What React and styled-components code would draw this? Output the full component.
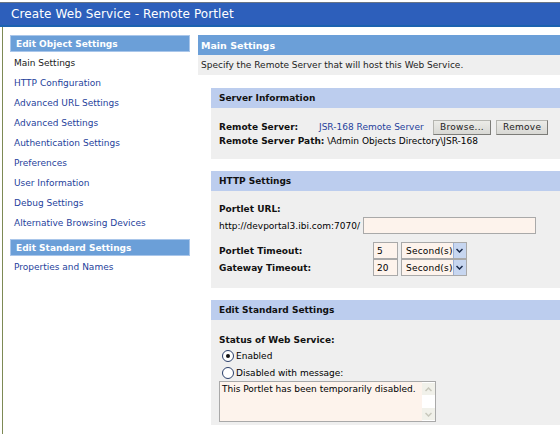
import React from 'react'
import styled, { createGlobalStyle } from 'styled-components'

const GlobalStyle = createGlobalStyle`
  html, body {
    margin: 0;
    padding: 0;
    background: #ffffff;
    font-family: "DejaVu Sans", Verdana, sans-serif;
    font-size: 9px;
    color: #000;
  }
`

const Page = styled.div`
  width: 560px;
  height: 434px;
  overflow: hidden;
  background: #fff;
  display: flex;
  flex-direction: column;
  padding-top: 2px;
  box-sizing: border-box;
`

const TitleBar = styled.div`
  height: 22px;
  background: #2d5fbb;
  border-top: 1px solid #6a7585;
  border-bottom: 2px solid #1c62b0;
  color: #fff;
  font-size: 12px;
  display: flex;
  align-items: center;
  padding-left: 11px;
  letter-spacing: 0.1px;
`

const Body = styled.div`
  flex: 1;
  display: flex;
  margin-left: 2px;
  border-left: 1px solid #7d8a55;
  padding-top: 8px;
  gap: 8px;
`

const Sidebar = styled.div`
  width: 180px;
  flex-shrink: 0;
  padding-left: 7px;
  display: flex;
  flex-direction: column;
`

const NavHeader = styled.div`
  background: #6b9fd8;
  border: 1px solid #a9c6ea;
  color: #fff;
  font-weight: bold;
  height: 15px;
  display: flex;
  align-items: center;
  padding-left: 5px;
  margin-top: ${({ $gap }) => $gap || 0}px;
`

const NavItem = styled.div`
  height: 20px;
  box-sizing: border-box;
  display: flex;
  align-items: center;
  padding: 1px 0 0 4px;
  color: ${({ $active }) => ($active ? '#1a1a1a' : '#1f3f9c')};
`

const Main = styled.div`
  flex: 1;
  min-width: 0;
  display: flex;
  flex-direction: column;
`

const MainHeader = styled.div`
  background: #6b9fd8;
  color: #fff;
  font-weight: bold;
  font-size: 9.5px;
  height: 20px;
  display: flex;
  align-items: center;
  padding-left: 3px;
`

const Description = styled.div`
  background: #efefef;
  height: 20px;
  display: flex;
  align-items: center;
  padding-left: 3px;
  color: #222;
`

const Section = styled.div`
  margin: ${({ $top }) => $top}px 0 0 13px;
`

const SectionHeader = styled.div`
  background: #bccdee;
  font-weight: bold;
  height: 20px;
  display: flex;
  align-items: center;
  padding-left: 8px;
  color: #111;
`

const SectionBody = styled.div`
  background: #efefef;
  height: ${({ $h }) => $h}px;
  padding: ${({ $pad }) => $pad || '12px 8px 0 8px'};
  box-sizing: border-box;
`

const Row = styled.div`
  display: flex;
  align-items: center;
  height: ${({ $h }) => $h || 16}px;
`

const Label = styled.div`
  font-weight: bold;
  width: ${({ $w }) => ($w ? `${$w}px` : 'auto')};
  flex-shrink: 0;
  color: #111;
`

const LinkText = styled.span`
  color: #1f3f9c;
  width: 114px;
  flex-shrink: 0;
`

const Button = styled.div`
  height: 15px;
  padding: 0 6px;
  display: flex;
  align-items: center;
  justify-content: center;
  width: ${({ $w }) => $w}px;
  box-sizing: border-box;
  background: linear-gradient(#ecece8, #d8d8d4);
  border: 1px solid #b5b5b0;
  border-right-color: #7c7c78;
  border-bottom-color: #7c7c78;
  color: #222;
  margin-right: 5px;
  letter-spacing: 0.3px;
`

const TextInput = styled.div`
  height: 17px;
  width: ${({ $w }) => $w}px;
  background: #fdf3ec;
  border: 1px solid #a9a9a9;
  box-sizing: border-box;
  display: flex;
  align-items: center;
  padding-left: 3px;
  margin-right: 3px;
`

const Select = styled.div`
  height: 17px;
  width: 66px;
  display: flex;
  border: 1px solid #a9a9a9;
  box-sizing: border-box;
  background: #fdf3ec;
`

const SelectValue = styled.div`
  flex: 1;
  display: flex;
  align-items: center;
  padding-left: 4px;
  letter-spacing: 0.2px;
`

const SelectArrow = styled.div`
  width: 13px;
  background: #c7d6f0;
  border-left: 1px solid #9cb0d6;
  display: flex;
  align-items: center;
  justify-content: center;
`

const Radio = styled.span`
  width: 10px;
  height: 10px;
  border-radius: 50%;
  border: 1px solid #2a3f6a;
  background: #fff;
  display: inline-flex;
  align-items: center;
  justify-content: center;
  margin: 0 2px 0 3px;
  &::after {
    content: '';
    width: 4px;
    height: 4px;
    border-radius: 50%;
    background: ${({ $checked }) => ($checked ? '#111' : 'transparent')};
  }
`

const TextArea = styled.div`
  width: 217px;
  height: 41px;
  border: 1px solid #a9a9a9;
  box-sizing: border-box;
  background: #fdf3ec;
  display: flex;
`

const TextAreaContent = styled.div`
  flex: 1;
  padding: 2px 2px;
`

const ScrollBar = styled.div`
  width: 13px;
  background: #fff;
  display: flex;
  flex-direction: column;
  justify-content: space-between;
  padding: 1px 0;
`

const ScrollButton = styled.div`
  height: 12px;
  background: #f1f1ea;
  display: flex;
  align-items: center;
  justify-content: center;
`

const Chevron = ({ up, color = '#1a2a4a' }) => (
  <svg width="7" height="5" viewBox="0 0 7 5">
    <path
      d={up ? 'M0.5 4 L3.5 1 L6.5 4' : 'M0.5 1 L3.5 4 L6.5 1'}
      fill="none"
      stroke={color}
      strokeWidth="1.5"
    />
  </svg>
)

const navItems = [
  'Main Settings',
  'HTTP Configuration',
  'Advanced URL Settings',
  'Advanced Settings',
  'Authentication Settings',
  'Preferences',
  'User Information',
  'Debug Settings',
  'Alternative Browsing Devices',
]

export default function App() {
  return (
    <Page>
      <GlobalStyle />
      <TitleBar>Create Web Service - Remote Portlet</TitleBar>
      <Body>
        <Sidebar>
          <NavHeader>Edit Object Settings</NavHeader>
          {navItems.map((item, i) => (
            <NavItem key={item} $active={i === 0}>
              {item}
            </NavItem>
          ))}
          <NavHeader $gap={7}>Edit Standard Settings</NavHeader>
          <NavItem>Properties and Names</NavItem>
        </Sidebar>
        <Main>
          <MainHeader>Main Settings</MainHeader>
          <Description>Specify the Remote Server that will host this Web Service.</Description>

          <Section $top={13}>
            <SectionHeader>Server Information</SectionHeader>
            <SectionBody $h={51} $pad="11px 8px 0 8px">
              <Row $h={16}>
                <Label $w={100}>Remote Server:</Label>
                <LinkText>JSR-168 Remote Server</LinkText>
                <Button $w={58}>Browse...</Button>
                <Button $w={55}>Remove</Button>
              </Row>
              <Row $h={12}>
                <Label>Remote Server Path:</Label>
                <span>&nbsp;\Admin Objects Directory\JSR-168</span>
              </Row>
            </SectionBody>
          </Section>

          <Section $top={12}>
            <SectionHeader>HTTP Settings</SectionHeader>
            <SectionBody $h={97} $pad="11px 8px 0 8px">
              <Row $h={14}>
                <Label>Portlet URL:</Label>
              </Row>
              <Row $h={19}>
                <span style={{ marginRight: 3 }}>http://devportal3.ibi.com:7070/</span>
                <TextInput $w={173} />
              </Row>
              <Row $h={7} />
              <Row $h={17}>
                <Label $w={154}>Portlet Timeout:</Label>
                <TextInput $w={25}>5</TextInput>
                <Select>
                  <SelectValue>Second(s)</SelectValue>
                  <SelectArrow>
                    <Chevron />
                  </SelectArrow>
                </Select>
              </Row>
              <Row $h={17}>
                <Label $w={154}>Gateway Timeout:</Label>
                <TextInput $w={25}>20</TextInput>
                <Select>
                  <SelectValue>Second(s)</SelectValue>
                  <SelectArrow>
                    <Chevron />
                  </SelectArrow>
                </Select>
              </Row>
            </SectionBody>
          </Section>

          <Section $top={12}>
            <SectionHeader>Edit Standard Settings</SectionHeader>
            <SectionBody $h={105} $pad="12px 8px 0 8px">
              <Row $h={15}>
                <Label>Status of Web Service:</Label>
              </Row>
              <Row $h={17}>
                <Radio $checked />
                <span>Enabled</span>
              </Row>
              <Row $h={17}>
                <Radio />
                <span>Disabled with message:</span>
              </Row>
              <TextArea>
                <TextAreaContent>This Portlet has been temporarily disabled.</TextAreaContent>
                <ScrollBar>
                  <ScrollButton>
                    <Chevron up color="#c8c8bc" />
                  </ScrollButton>
                  <ScrollButton>
                    <Chevron color="#c8c8bc" />
                  </ScrollButton>
                </ScrollBar>
              </TextArea>
            </SectionBody>
          </Section>
        </Main>
      </Body>
    </Page>
  )
}
